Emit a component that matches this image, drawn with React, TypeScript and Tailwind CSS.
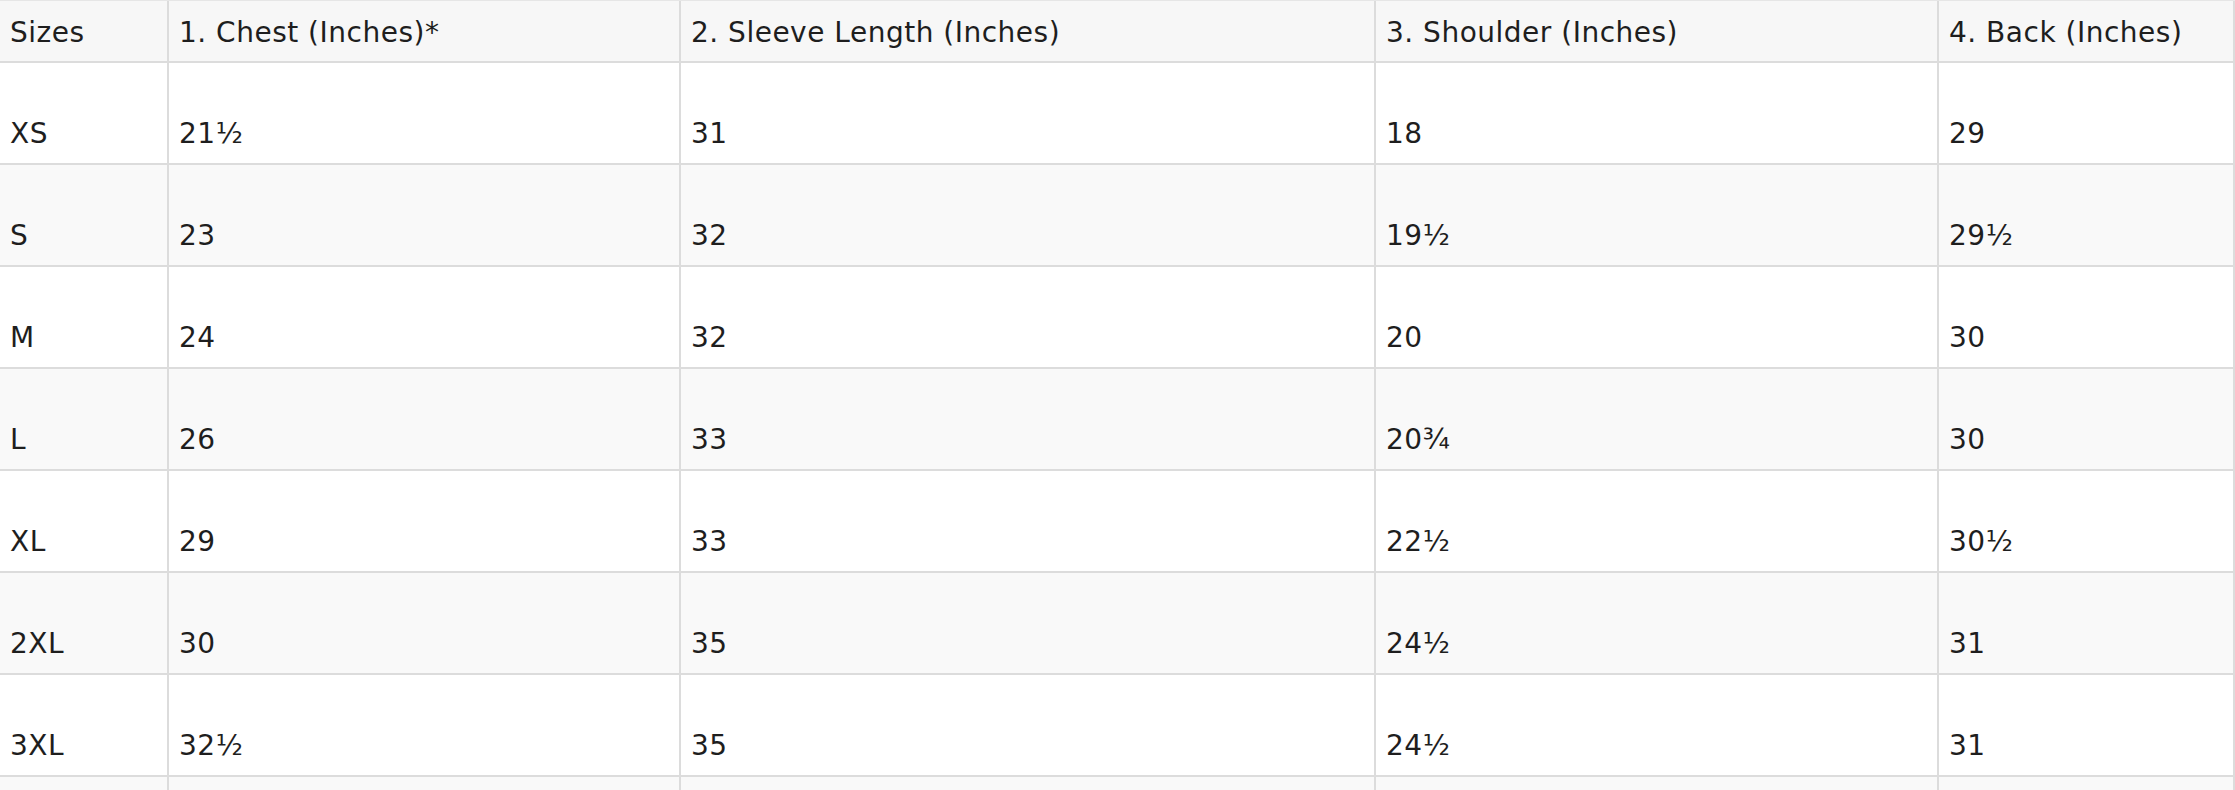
const headers = [
  'Sizes',
  '1. Chest (Inches)*',
  '2. Sleeve Length (Inches)',
  '3. Shoulder (Inches)',
  '4. Back (Inches)',
];

const rows = [
  ['XS', '21½', '31', '18', '29'],
  ['S', '23', '32', '19½', '29½'],
  ['M', '24', '32', '20', '30'],
  ['L', '26', '33', '20¾', '30'],
  ['XL', '29', '33', '22½', '30½'],
  ['2XL', '30', '35', '24½', '31'],
  ['3XL', '32½', '35', '24½', '31'],
  ['', '', '', '', ''],
];

const gridCols = 'grid grid-cols-[169px_512px_695px_563px_1fr]';

const App = () => {
  return (
    <div className="w-[2235px] h-[790px] overflow-hidden bg-white font-['DejaVu_Sans',Verdana,sans-serif] text-[28px] leading-[32px] tracking-[0.5px] text-[#1e1e1e]">
      <div className="border-t border-[#e6e6e6]">
        {/* header */}
        <div className={`${gridCols} h-[62px] bg-[#f7f7f7] border-b-2 border-[#dcdcdc]`}>
          {headers.map((h, i) => (
            <div
              key={i}
              className="flex items-end pl-[10px] pb-[12px] border-r-2 border-[#dcdcdc] whitespace-nowrap"
            >
              {h}
            </div>
          ))}
        </div>

        {/* body rows */}
        {rows.map((row, r) => (
          <div
            key={r}
            className={`${gridCols} h-[102px] border-b-2 border-[#dcdcdc] ${r % 2 === 1 ? 'bg-[#f9f9f9]' : 'bg-white'}`}
          >
            {row.map((cell, i) => (
              <div
                key={i}
                className="flex items-end pl-[10px] pb-[13px] border-r-2 border-[#dcdcdc] whitespace-nowrap"
              >
                {cell}
              </div>
            ))}
          </div>
        ))}
      </div>
    </div>
  );
};

export default App;
